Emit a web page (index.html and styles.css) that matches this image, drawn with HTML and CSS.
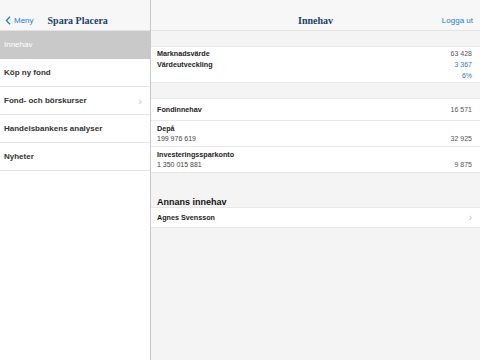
FILE: index.html
```html
<!DOCTYPE html>
<html lang="sv">
<head>
    <meta charset="UTF-8">
    <meta name="viewport" content="width=device-width, initial-scale=1.0">
    <title>Spara Placera</title>
    <link rel="stylesheet" href="styles.css">
</head>
<body>
    <div class="statusbar">
        <span class="time">10:51</span>
        <span class="battery"></span>
    </div>

    <aside class="sidebar">
        <div class="navbar">
            <a class="back">
                <svg width="6" height="9" viewBox="0 0 6 9"><path d="M5 0.8L1.4 4.5L5 8.2" fill="none" stroke="#2a7bd0" stroke-width="1.3"/></svg>
                Meny
            </a>
            <span class="brand">Spara Placera</span>
        </div>
        <ul class="menu">
            <li class="selected">Innehav</li>
            <li>Köp ny fond</li>
            <li>Fond- och börskurser <span class="chevron">›</span></li>
            <li>Handelsbankens analyser</li>
            <li>Nyheter</li>
        </ul>
    </aside>

    <main class="main">
        <div class="navbar center">
            <span class="title">Innehav</span>
            <a class="logout">Logga ut</a>
        </div>

        <section class="group summary">
            <div class="label">Marknadsvärde</div>
            <div class="value">63 428</div>
            <div class="label">Värdeutveckling</div>
            <div class="value blue">3 367</div>
            <div></div>
            <div class="value blue">6%</div>
        </section>

        <section class="group">
            <div class="row single">
                <div class="label">Fondinnehav</div>
                <div class="value">16 571</div>
            </div>
            <div class="row">
                <div>
                    <div class="label">Depå</div>
                    <div class="sub">199 976 619</div>
                </div>
                <div class="value">32 925</div>
            </div>
            <div class="row">
                <div>
                    <div class="label">Investeringssparkonto</div>
                    <div class="sub">1 350 015 881</div>
                </div>
                <div class="value">9 875</div>
            </div>
        </section>

        <h2 class="heading">Annans innehav</h2>
        <section class="group">
            <div class="row person">
                <div class="label">Agnes Svensson</div>
                <span class="chevron">›</span>
            </div>
        </section>
    </main>
</body>
</html>
```

FILE: styles.css
```css
body {
    margin: 0;
    width: 480px;
    height: 360px;
    display: flex;
    font-family: 'Liberation Sans', Arial, sans-serif;
    color: #222;
    overflow: hidden;
}

.statusbar {
    position: absolute;
    top: 0;
    left: 0;
    width: 480px;
    height: 10px;
    font-size: 5px;
    color: #222;
}

.statusbar .time {
    position: absolute;
    left: 234px;
    top: 2px;
}

.statusbar .battery {
    position: absolute;
    right: 6px;
    top: 3px;
    width: 10px;
    height: 4px;
    background: #111;
}

.sidebar {
    width: 150px;
    border-right: 1px solid #c8c7cc;
    background: #fff;
}

.navbar {
    height: 20px;
    padding-top: 10px;
    background: #f7f7f7;
    border-bottom: 1px solid #e2e2e2;
    display: flex;
    align-items: center;
    box-sizing: content-box;
}

.back {
    display: flex;
    align-items: center;
    gap: 3px;
    padding-left: 5px;
    font-size: 8px;
    color: #2a7bd0;
}

.brand {
    margin-left: 14px;
    font-family: 'Liberation Serif', serif;
    font-weight: bold;
    font-size: 10px;
    color: #1d3d6b;
}

.menu {
    list-style: none;
    margin: 0;
    padding: 0;
}

.menu li {
    height: 27px;
    border-bottom: 1px solid #e6e6e6;
    display: flex;
    align-items: center;
    justify-content: space-between;
    padding: 0 8px 0 4px;
    font-size: 8px;
    font-weight: bold;
    color: #333;
}

.menu li.selected {
    background: #c9c9c9;
    color: #fff;
    font-weight: normal;
    border-bottom-color: #c9c9c9;
}

.chevron {
    font-size: 11px;
    font-weight: normal;
    color: #c4c4c4;
}

.main {
    flex: 1;
    background: #f4f4f4;
}

.navbar.center {
    justify-content: center;
    position: relative;
}

.title {
    font-family: 'Liberation Serif', serif;
    font-weight: bold;
    font-size: 10px;
    color: #1d3d6b;
}

.logout {
    position: absolute;
    right: 7px;
    bottom: 5px;
    font-size: 8px;
    color: #2a7bd0;
}

.group {
    background: #fff;
    border-top: 1px solid #e8e8e8;
    border-bottom: 1px solid #e8e8e8;
}

.summary {
    margin-top: 15px;
    padding: 1px 8px 1px 6px;
    display: grid;
    grid-template-columns: 1fr auto;
    line-height: 11px;
}

.summary + .group {
    margin-top: 15px;
}

.label {
    font-size: 7.2px;
    font-weight: bold;
    color: #222;
}

.value {
    font-size: 7px;
    color: #555;
    text-align: right;
}

.value.blue {
    color: #2a7bd0;
}

.sub {
    font-size: 7px;
    color: #444;
    margin-top: 2px;
}

.row {
    display: flex;
    justify-content: space-between;
    align-items: flex-end;
    padding: 4px 8px 4px 6px;
    height: 17px;
    border-bottom: 1px solid #e8e8e8;
}

.row:last-child {
    border-bottom: none;
}

.row.single {
    align-items: center;
    height: 13px;
}

.heading {
    margin: 24px 0 0 6px;
    font-size: 9px;
    font-weight: bold;
    color: #111;
}

.row.person {
    align-items: center;
    height: 11px;
}

.row.person .chevron {
    font-size: 10px;
}
```
